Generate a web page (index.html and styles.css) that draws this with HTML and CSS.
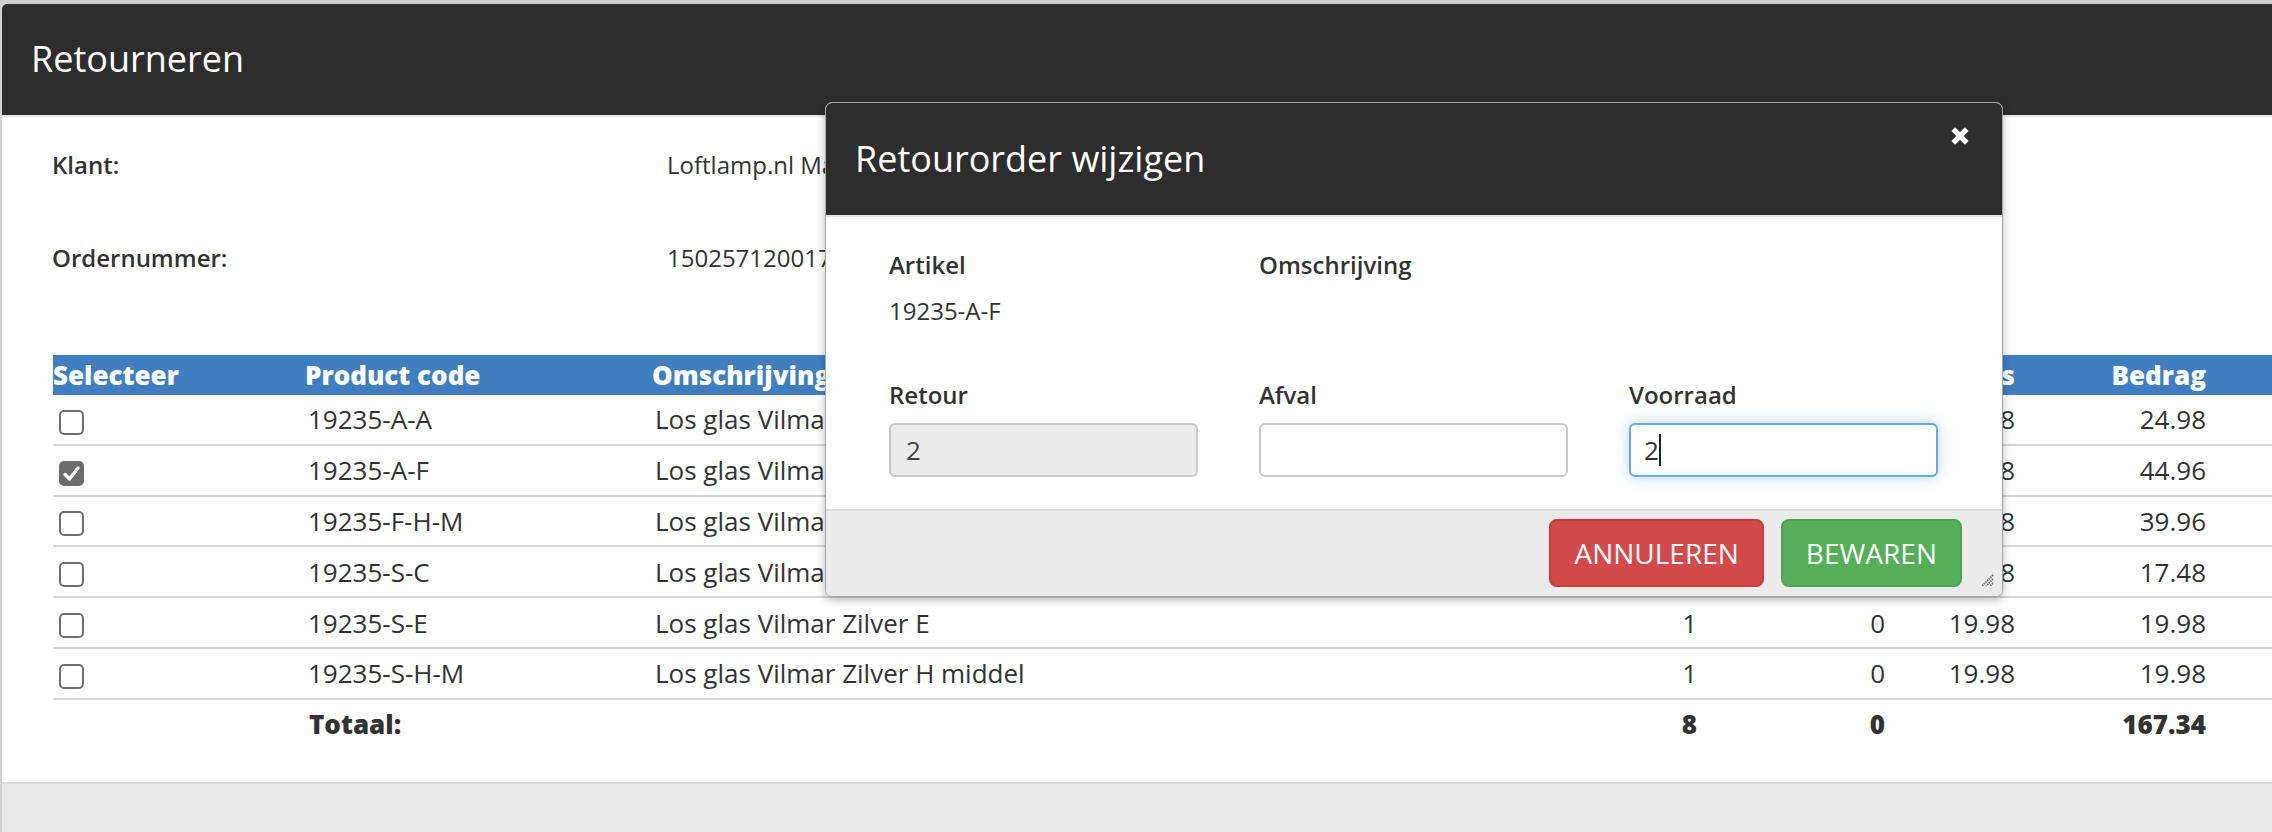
FILE: index.html
```html
<!DOCTYPE html>
<html lang="nl">
<head>
<meta charset="utf-8">
<title>Retourneren</title>
<link rel="stylesheet" href="styles.css">
</head>
<body>
<section class="panel">
  <header class="panel-header">
    <h1 class="panel-title">Retourneren</h1>
  </header>
  <div class="panel-body">
    <dl class="info">
      <dt>Klant:</dt><dd>Loftlamp.nl Magazijn</dd>
      <dt>Ordernummer:</dt><dd>1502571200175</dd>
    </dl>
    <table class="items">
      <colgroup>
        <col class="c-sel"><col class="c-code"><col class="c-desc"><col class="c-qty"><col class="c-waste"><col class="c-price"><col class="c-total">
      </colgroup>
      <thead>
        <tr>
          <th>Selecteer</th><th>Product code</th><th>Omschrijving</th>
          <th class="num">Aantal</th><th class="num">Afval</th><th class="num">Prijs</th><th class="num last">Bedrag</th>
        </tr>
      </thead>
      <tbody>
        <tr>
          <td><span class="check"></span></td><td class="txt">19235-A-A</td><td class="txt">Los glas Vilmar Amber A</td>
          <td class="num">1</td><td class="num">0</td><td class="num">24.98</td><td class="num last">24.98</td>
        </tr>
        <tr>
          <td><span class="check is-checked"><svg viewBox="0 0 25 25" width="25" height="25"><path d="M6 13.5 L10.5 18 L19 7" fill="none" stroke="#fff" stroke-width="3.4" stroke-linecap="round" stroke-linejoin="round"/></svg></span></td><td class="txt">19235-A-F</td><td class="txt">Los glas Vilmar Amber F</td>
          <td class="num">2</td><td class="num">0</td><td class="num">22.48</td><td class="num last">44.96</td>
        </tr>
        <tr>
          <td><span class="check"></span></td><td class="txt">19235-F-H-M</td><td class="txt">Los glas Vilmar Fumé H middel</td>
          <td class="num">2</td><td class="num">0</td><td class="num">19.98</td><td class="num last">39.96</td>
        </tr>
        <tr>
          <td><span class="check"></span></td><td class="txt">19235-S-C</td><td class="txt">Los glas Vilmar Zilver C</td>
          <td class="num">1</td><td class="num">0</td><td class="num">17.48</td><td class="num last">17.48</td>
        </tr>
        <tr>
          <td><span class="check"></span></td><td class="txt">19235-S-E</td><td class="txt">Los glas Vilmar Zilver E</td>
          <td class="num">1</td><td class="num">0</td><td class="num">19.98</td><td class="num last">19.98</td>
        </tr>
        <tr>
          <td><span class="check"></span></td><td class="txt">19235-S-H-M</td><td class="txt">Los glas Vilmar Zilver H middel</td>
          <td class="num">1</td><td class="num">0</td><td class="num">19.98</td><td class="num last">19.98</td>
        </tr>
      </tbody>
      <tfoot>
        <tr>
          <td></td><td class="txt">Totaal:</td><td></td>
          <td class="num">8</td><td class="num">0</td><td class="num"></td><td class="num last">167.34</td>
        </tr>
      </tfoot>
    </table>
  </div>
  <footer class="panel-footer"></footer>
</section>

<div class="modal" role="dialog">
  <div class="modal-header">
    <h2 class="modal-title">Retourorder wijzigen</h2>
    <span class="modal-close" aria-label="Sluiten">
      <svg viewBox="0 0 20 20" width="20" height="20"><path d="M3.2 3.2 L16.8 16.8 M16.8 3.2 L3.2 16.8" stroke="#fff" stroke-width="5.2" stroke-linecap="butt"/></svg>
    </span>
  </div>
  <div class="modal-body">
    <div class="field">
      <div class="field-label">Artikel</div>
      <div class="field-value">19235-A-F</div>
    </div>
    <div class="field">
      <div class="field-label">Omschrijving</div>
      <div class="field-value"></div>
    </div>
    <div class="field"></div>
    <div class="field">
      <div class="field-label">Retour</div>
      <div class="input is-disabled">2</div>
    </div>
    <div class="field">
      <div class="field-label">Afval</div>
      <div class="input"></div>
    </div>
    <div class="field">
      <div class="field-label">Voorraad</div>
      <div class="input is-focused">2<span class="caret"></span></div>
    </div>
  </div>
  <div class="modal-footer">
    <button class="btn btn-red" type="button">ANNULEREN</button>
    <button class="btn btn-green" type="button">BEWAREN</button>
    <span class="grip">
      <svg viewBox="0 0 14 14" width="14" height="14"><path d="M13 2 L2 13 M13 6 L6 13 M13 10 L10 13" stroke="#666" stroke-width="1.8" stroke-dasharray="1.4 0.9"/></svg>
    </span>
  </div>
</div>
</body>
</html>
```

FILE: styles.css
```css
* { box-sizing: border-box; }

html, body { margin: 0; padding: 0; }

body {
  width: 2272px;
  height: 832px;
  overflow: hidden;
  position: relative;
  background: #cfcfcf;
  font-family: "Open Sans", "Liberation Sans", sans-serif;
  color: #333;
}

.panel {
  margin-top: 4px;
  height: 828px;
  background: #fff;
  border-left: 2px solid #cdd2da;
  border-top-left-radius: 6px;
  display: flex;
  flex-direction: column;
}

.panel-header {
  height: 113px;
  flex: none;
  background: #2d2d2d;
  border-bottom: 2px solid #e6e6e6;
  border-top-left-radius: 5px;
  padding: 35px 0 0 29px;
}

.panel-title {
  margin: 0;
  font-size: 36px;
  font-weight: 400;
  line-height: 40px;
  color: #fff;
}

.panel-body {
  flex: 1;
  padding: 31px 0 0 51px;
}

.info {
  margin: 0 0 0 -1px;
  display: grid;
  grid-template-columns: 615px auto;
  row-gap: 59px;
  font-size: 24px;
  line-height: 34px;
}

.info dt { font-weight: 600; }
.info dd { margin: 0; white-space: nowrap; }

.items {
  margin-top: 80px;
  width: 2219px;
  table-layout: fixed;
  border-collapse: separate;
  border-spacing: 0;
  font-size: 26px;
  color: #333;
}

.c-sel { width: 252px; }
.c-code { width: 347px; }
.c-desc { width: 848px; }
.c-qty { width: 200px; }
.c-waste { width: 188px; }
.c-price { width: 130px; }
.c-total { width: 254px; }

.items th {
  height: 40px;
  padding: 0;
  background: #3f7ebf;
  color: #fff;
  font-weight: 800;
  text-align: left;
  line-height: 40px;
  white-space: nowrap;
}

.items tbody td {
  height: 50.8px;
  padding: 0;
  border-bottom: 2px solid #d6d6d6;
  vertical-align: middle;
  white-space: nowrap;
  line-height: 34px;
}

.items tfoot td {
  padding: 6px 0 0 0;
  vertical-align: top;
  font-weight: 800;
  line-height: 36px;
}

.items td.txt { padding-left: 3px; }
.items tfoot td.txt { padding-left: 4px; }
.items .num { text-align: right; padding-right: 3px; }
.items .last { padding-right: 66px; }

.check {
  display: block;
  width: 25px;
  height: 25px;
  margin: 6px 0 0 6px;
  border: 2px solid #6f6f6f;
  border-radius: 5px;
  background: #fff;
}

.check.is-checked {
  border: none;
  background: #6c6c6c;
}

.check svg { display: block; }

.panel-footer {
  flex: none;
  height: 50px;
  background: #e9e9e9;
  border-top: 2px solid #dadada;
}

/* Modal */
.modal {
  position: absolute;
  left: 825px;
  top: 102px;
  width: 1178px;
  height: 495px;
  border: 1px solid #a5a5a5;
  border-radius: 7px;
  background: #fff;
  box-shadow: 0 3px 8px rgba(0, 0, 0, 0.28);
  overflow: hidden;
  display: flex;
  flex-direction: column;
}

.modal-header {
  position: relative;
  height: 114px;
  flex: none;
  background: #2d2d2d;
  border-bottom: 2px solid #e5e5e5;
  padding: 36px 0 0 29px;
}

.modal-title {
  margin: 0;
  font-size: 36px;
  font-weight: 400;
  line-height: 40px;
  color: #fff;
}

.modal-close {
  position: absolute;
  top: 23px;
  right: 32px;
  width: 20px;
  height: 20px;
}

.modal-close svg { display: block; }

.modal-body {
  height: 292px;
  flex: none;
  padding: 31px 63px 0 63px;
  display: grid;
  grid-template-columns: repeat(3, 309px);
  column-gap: 61px;
  row-gap: 50px;
  align-content: start;
}

.field-label {
  font-size: 24px;
  font-weight: 600;
  line-height: 34px;
}

.field-value {
  margin-top: 12px;
  height: 34px;
  font-size: 24px;
  line-height: 34px;
}

.input {
  margin-top: 11px;
  height: 54px;
  border: 2px solid #c9c9c9;
  border-radius: 6px;
  padding: 0 15px;
  display: flex;
  align-items: center;
  font-size: 26px;
  color: #444;
  background: #fff;
}

.input.is-disabled { background: #ebebeb; }

.input.is-focused {
  border-color: #66a9e6;
  box-shadow: 0 0 14px rgba(102, 175, 233, 0.5);
  color: #333;
  padding-left: 13px;
}

.caret {
  display: inline-block;
  width: 2px;
  height: 32px;
  margin-left: 0;
  background: #222;
}

.modal-footer {
  position: relative;
  flex: 1;
  background: #ebebeb;
  border-top: 2px solid #dcdcdc;
  padding: 8px 40px 0 0;
  display: flex;
  justify-content: flex-end;
  align-items: flex-start;
  gap: 17px;
}

.btn {
  height: 68px;
  padding: 0 23px;
  border: 2px solid;
  border-radius: 8px;
  font-family: "Open Sans", "Liberation Sans", sans-serif;
  font-size: 28px;
  line-height: 64px;
  color: #fff;
  cursor: pointer;
}

.btn-red { background: #d24a4b; border-color: #c93a3b; }
.btn-green { background: #55ae59; border-color: #4aa64e; }

.grip {
  position: absolute;
  right: 8px;
  bottom: 9px;
  width: 14px;
  height: 14px;
}

.grip svg { display: block; }
```
